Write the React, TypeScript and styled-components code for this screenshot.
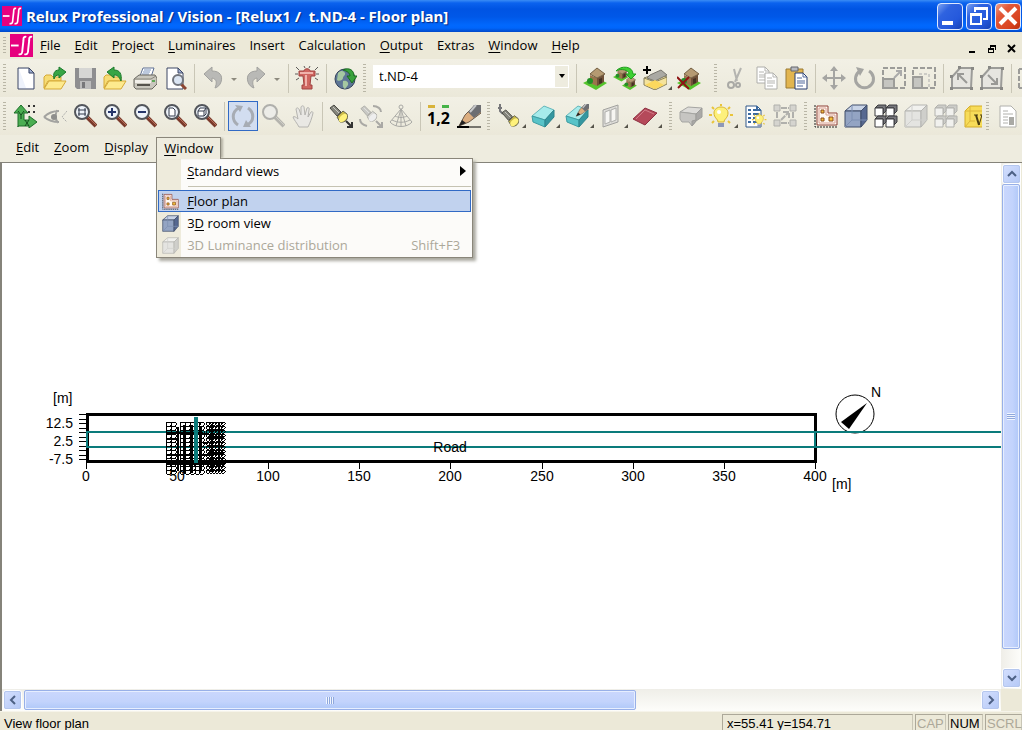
import React from 'react';
import styled, { createGlobalStyle, css } from 'styled-components';

const GlobalStyle = createGlobalStyle`
  * { box-sizing: border-box; }
  html, body { margin: 0; padding: 0; }
  body { background: #ece9d8; overflow: hidden; }
  button, select { font: inherit; color: inherit; }
`;

const Page = styled.div`
  display: flex;
  flex-direction: column;
  height: 100vh;
  overflow: hidden;
  background: #ece9d8;
  color: #000;
  font: 13px/18px "Open Sans", sans-serif;
`;

/* ---------- title bar ---------- */

const TitleBar = styled.header`
  display: flex;
  flex: none;
  align-items: center;
  height: 32px;
  padding: 0 1px 0 2px;
  background: linear-gradient(#3a8cf5 0, #0b62ee 3px, #0054e3 9px, #0058e8 17px, #0168fd 25px, #0066fc 28px, #0148c8 32px);
`;

const Title = styled.h1`
  flex: 1;
  margin: 0 0 0 4px;
  color: #fff;
  font: bold 15px/20px "Noto Sans", sans-serif;
  text-shadow: 1px 1px 1px #0a2a80;
  white-space: pre;
`;

const WindowButtons = styled.div`
  display: flex;
  gap: 3px;
`;

const WindowButton = styled.button<{ $danger?: boolean }>`
  display: grid;
  place-items: center;
  width: 26px;
  height: 27px;
  padding: 0;
  border: 1px solid #dfe9ff;
  border-radius: 4px;
  background: ${(p) =>
    p.$danger
      ? 'linear-gradient(135deg, #f0a088 0, #e2593a 30%, #d9431f 75%, #b83010 100%)'
      : 'linear-gradient(135deg, #7ba2f2 0, #2f63e0 30%, #2458dc 70%, #1741b4 100%)'};
`;

/* ---------- menu bars ---------- */

const MenuBar = styled.nav`
  display: flex;
  flex: none;
  align-items: center;
  height: 27px;
  padding: 0 4px 0 0;
`;

const MenuButton = styled.button`
  height: 22px;
  padding: 0 7px 2px;
  border: 0;
  background: none;
  white-space: nowrap;
  u { text-underline-offset: 2px; }
`;

const MdiButtons = styled.div`
  display: flex;
  gap: 8px;
  margin: 6px 0 0 auto;
`;

const MdiButton = styled.button`
  display: grid;
  width: 12px;
  height: 12px;
  padding: 0;
  border: 0;
  background: none;
`;

const ViewMenuBar = styled.nav`
  display: flex;
  flex: none;
  align-items: flex-start;
  gap: 1px;
  height: 28px;
  padding: 2px 9px 0;
  border-bottom: 1px solid #85837a;
  background: #eeecdf;
`;

const MenuHost = styled.div`
  position: relative;
  z-index: 2;
`;

const OpenMenuButton = styled(MenuButton)`
  position: relative;
  z-index: 2;
  display: block;
  border: 1px solid #8a867a;
  border-bottom: 0;
  background: #eeecdf;
  box-shadow: 3px 0 2px -1px #b5b2a4;
`;

const Dropdown = styled.ul`
  position: absolute;
  top: 21px;
  left: 0;
  width: 317px;
  margin: 0;
  padding: 1px;
  border: 1px solid #8a867a;
  background: linear-gradient(90deg, #eeebdc 24px, #fcfbf9 24px);
  box-shadow: 3px 3px 3px #aaa9a0;
  list-style: none;
`;

const DropdownItem = styled.button<{ $active?: boolean }>`
  display: flex;
  align-items: center;
  width: 100%;
  height: 22px;
  padding: 0 8px 0 2px;
  border: 1px solid ${(p) => (p.$active ? '#316ac5' : 'transparent')};
  background: ${(p) => (p.$active ? '#c1d2ee' : 'none')};
  text-align: left;
  u { text-underline-offset: 2px; }
  &:disabled { color: #aca899; }
`;

const ItemIcon = styled.span`
  display: grid;
  flex: none;
  place-items: center;
  width: 18px;
  margin-right: 8px;
`;

const ItemHint = styled.span`
  margin-left: auto;
  padding-right: 2px;
`;

const Submark = styled.svg`
  margin: 0 -4px 0 auto;
`;

const DropdownRule = styled.li`
  height: 1px;
  margin: 4px 0 3px 30px;
  background: #c5c2b2;
`;

/* ---------- tool bars ---------- */

const ToolRow = styled.div`
  display: flex;
  flex: none;
  align-items: center;
  height: 38px;
  overflow: hidden;
  background: linear-gradient(#f2f0e5, #eeecdf 60%, #ebe8d9);
`;

const Band = styled.div<{ $end?: number }>`
  display: flex;
  flex: none;
  align-items: center;
  padding-right: ${(p) => p.$end ?? 0}px;
`;

const Handle = styled.span<{ $short?: boolean }>`
  flex: none;
  width: 3px;
  height: ${(p) => (p.$short ? 18 : 28)}px;
  margin: 0 4px 0 3px;
  background: repeating-linear-gradient(#b9b6a6 0 1px, transparent 1px 3px);
`;

const Separator = styled.span`
  flex: none;
  width: 1px;
  height: 29px;
  margin: 0 3px 0 4px;
  background: #c9c6b6;
`;

const ToolButton = styled.button<{ $on?: boolean; $kind?: 'corner' | 'split' | 'cut' }>`
  display: flex;
  flex: none;
  align-items: center;
  width: 30px;
  height: 30px;
  padding: 0 2px;
  border: 1px solid transparent;
  background: none;
  ${(p) => p.$on && css`
    border-color: #316ac5;
    background: #d2ddf0;
  `}
  ${(p) => p.$kind === 'corner' && css`width: 34px;`}
  ${(p) => p.$kind === 'split' && css`width: 43px;`}
  ${(p) => p.$kind === 'cut' && css`width: 22px; overflow: hidden;`}
  & > svg { flex: none; }
`;

const CornerMark = styled.span`
  align-self: flex-end;
  width: 0;
  margin: 0 0 2px 1px;
  border: 2px solid #55534a;
  border-top-color: transparent;
  border-left-color: transparent;
`;

const SplitMark = styled.span`
  width: 0;
  margin: 2px 0 0 6px;
  border: 3px solid transparent;
  border-top-color: #8d8a7e;
  border-bottom: 0;
`;

const ComboBox = styled.label`
  display: flex;
  position: relative;
  width: 196px;
  height: 23px;
  margin: -4px 3px 0;
  border: 1px solid #fff;
  background: #fff;
  select {
    width: 100%;
    padding: 0 18px 0 5px;
    border: 0;
    appearance: none;
    background: #fff;
  }
`;

const ComboArrow = styled.span`
  position: absolute;
  inset: 0 0 0 auto;
  display: grid;
  place-items: center;
  width: 13px;
  background: #eeecdf;
  pointer-events: none;
`;

/* ---------- work area ---------- */

const WorkArea = styled.main`
  display: grid;
  flex: 1;
  grid-template: minmax(0, 1fr) 22px / minmax(0, 1fr) 20px;
  min-height: 0;
  padding-right: 1px;
  border-left: 2px solid #85837a;
`;

const Plan = styled.svg`
  width: 100%;
  height: 100%;
  background: #fff;
  font: 14px "Liberation Sans", Arial, sans-serif;
`;

const Scroll = styled.div<{ $vertical?: boolean }>`
  display: flex;
  flex-direction: ${(p) => (p.$vertical ? 'column' : 'row')};
  padding: 1px;
  background: linear-gradient(${(p) => (p.$vertical ? '90deg' : '180deg')}, #efeee8, #fdfdfa);
`;

const ScrollButton = styled.button`
  display: grid;
  flex: none;
  place-items: center;
  width: 19px;
  height: 20px;
  padding: 0;
  border: 1px solid #fff;
  border-radius: 3px;
  outline: 1px solid #b5c7ee;
  outline-offset: -2px;
  background: linear-gradient(135deg, #d5e0fe, #b4c8f6);
`;

const Track = styled.div<{ $vertical?: boolean }>`
  display: flex;
  flex: 1;
  flex-direction: ${(p) => (p.$vertical ? 'column' : 'row')};
  min-width: 0;
  min-height: 0;
  padding: ${(p) => (p.$vertical ? '0' : '0 0 0 2px')};
`;

const Thumb = styled.div<{ $vertical?: boolean }>`
  display: grid;
  flex: 0 0 ${(p) => (p.$vertical ? '96%' : '64%')};
  place-items: center;
  border: 1px solid #98b0e8;
  border-radius: 2px;
  box-shadow: inset 0 0 0 1px #e6eeff;
  background: linear-gradient(${(p) => (p.$vertical ? '90deg' : '180deg')}, #cad7fd, #c2d3fc 60%, #b0c8f8);
`;

const Grip = styled.span<{ $vertical?: boolean }>`
  width: 8px;
  height: 7px;
  background: repeating-linear-gradient(${(p) => (p.$vertical ? '180deg' : '90deg')}, #f0f5ff 0 1px, #8fa8dc 1px 2px);
`;

/* ---------- status bar ---------- */

const StatusBar = styled.footer`
  display: flex;
  flex: none;
  gap: 2px;
  height: 19px;
  padding: 2px 0 0 4px;
  overflow: hidden;
  border-top: 1px solid #f6f4ea;
  font: 13px/18px "Liberation Sans", Arial, sans-serif;
`;

const StatusText = styled.span`
  flex: 1;
  padding-top: 1px;
`;

const StatusPane = styled.span<{ $width: number; $off?: boolean }>`
  flex: none;
  width: ${(p) => p.$width}px;
  height: 22px;
  padding-left: ${(p) => (p.$width > 50 ? 4 : 1)}px;
  border: 1px solid #aca899;
  border-right-color: #c9c6b6;
  color: ${(p) => (p.$off ? '#aca899' : '#000')};
`;

/* ---------- icons ---------- */

const Icon = ({ children, size = 24 }: { children: React.ReactNode; size?: number }) => (
  <svg width={size} height={size} viewBox="0 0 24 24" fill="none" aria-hidden="true">{children}</svg>
);

const Logo = ({ size }: { size: number }) => (
  <svg width={size} height={size} viewBox="0 0 24 24" fill="none" stroke="#fff" aria-hidden="true">
    <path d="M0 0h24v24H0z" fill="#e6007e" stroke="none" />
    <path d="M1 12h8" strokeWidth="2" />
    <path d="M17 3c-3-1-3 2-3 4l-1 9c0 4-1 6-4 5M23 3c-3-1-3 2-3 4l-1 9c0 4-1 6-4 5" strokeWidth="2" />
  </svg>
);

const NewIcon = () => (
  <Icon>
    <path d="M5 2h11l5 5v16H5z" fill="#eef2fb" stroke="#3c4664" />
    <path d="M6 3h9v5h5v14H13z" fill="#fff" />
    <path d="M16 2v5h5z" fill="#9fb0d4" stroke="#3c4664" />
  </Icon>
);

const Folder = ({ flip }: { flip?: boolean }) => (
  <Icon>
    <path d="M1 11l2-2h5l2 2h8v4H5l-4 7z" fill="#f6dc74" stroke="#d5a936" />
    <path d="M6 15h17l-5 8H1z" fill="#fdea8e" stroke="#d5a936" />
    {flip ? (
      <path d="M4 6l7-5v3c6 0 8 4 7 11-2-4-3-6-7-6v3z" fill="#37a545" stroke="#1b7a2b" />
    ) : (
      <path d="M23 6l-7-5v3c-5 0-6 4-5 9 1-3 2-4 5-4v3z" fill="#37a545" stroke="#1b7a2b" />
    )}
  </Icon>
);

const SaveIcon = () => (
  <Icon>
    <path d="M2 2h21v21H4l-2-2z" fill="#8e8e90" />
    <path d="M6 2h13v10H6z" fill="#d6d6d4" />
    <path d="M7 15h11v8H7z" fill="#bcbcbc" />
    <path d="M9 16h3v6H9z" fill="#77777a" />
  </Icon>
);

const PrintIcon = () => (
  <Icon>
    <path d="M7 10l3-8h11l-3 9z" fill="#fff" stroke="#5d6f93" />
    <path d="M11 4h7M10 6h7M9 8h7" stroke="#7892bb" />
    <path d="M1 13l5-4h16l2 3v6l-5 5H3l-2-2z" fill="#c9c7bd" stroke="#68665f" />
    <path d="M1 13h17l5-3" stroke="#8a887e" />
    <path d="M2 14h16v3H2z" fill="#f2f0ea" />
    <path d="M4 19h13" stroke="#55534c" strokeWidth="2" />
    <path d="M19 15h3" stroke="#5da857" strokeWidth="2" />
  </Icon>
);

const PreviewIcon = () => (
  <Icon>
    <path d="M4 2h11l5 5v16H4z" fill="#fff" stroke="#3c4664" />
    <path d="M15 2v5h5z" fill="#9fb0d4" stroke="#3c4664" />
    <path d="M18 18l5 5" stroke="#8c4632" strokeWidth="3" />
    <circle cx="15" cy="14" r="5" fill="#dbe6f4" stroke="#71757d" strokeWidth="2" />
  </Icon>
);

const UndoIcon = ({ flip }: { flip?: boolean }) => (
  <Icon>
    <g transform={flip ? 'matrix(-1 0 0 1 24 0)' : undefined}>
      <path d="M3 8l8-7v4c8 0 11 5 9 11-1 3-3 5-6 6 2-5 2-9-3-10v4z" fill="#b9b9b6" stroke="#a2a29f" />
    </g>
  </Icon>
);

const HydrantIcon = () => (
  <Icon>
    <path d="M9 5c0-3 6-3 6 0h5v5h-4l-1 9h2v4H7v-4h2L8 10H4V5z" fill="#cf6660" stroke="#a04340" />
    <path d="M5 7h13M11 9v11" stroke="#f0b3ac" strokeWidth="2" />
    <path d="M1 1l3 3M0 8h3M1 14l3-2M23 1l-3 3M24 8h-3M23 14l-3-2M9 0l1 2M15 0l-1 2" stroke="#5c5a58" />
  </Icon>
);

const GlobeIcon = () => (
  <Icon>
    <circle cx="12" cy="13" r="10" fill="#5d7595" stroke="#34435b" />
    <path d="M5 7c3-3 6-2 7 0s-2 3-2 5-4 4-6 2zM10 15c3-1 6 1 5 4l-3 4c-3-2-2-5-2-8z" fill="#a5c8a1" />
    <path d="M10 4c6-3 11 0 11 6h3l-5 7-5-7h3c0-3-3-5-7-6z" fill="#39a23c" stroke="#1c6c22" />
  </Icon>
);

const House = () => (
  <g>
    <path d="M0 17l12-6 12 6-11 7z" fill="#55c42c" />
    <path d="M7 9l7 3v8l-7-3z" fill="#9b744c" />
    <path d="M14 12l7-4v8l-7 4z" fill="#6f5038" />
    <path d="M7 8l7-6 8 6-8 4z" fill="#b59a72" stroke="#756044" />
    <path d="M16 13l3-1v5l-3 1z" fill="#453123" />
    <circle cx="7" cy="15" r="3" fill="#238f26" />
  </g>
);

const SiteIcon = () => <Icon><House /></Icon>;

const SitesIcon = () => (
  <Icon>
    <g transform="scale(.65)"><House /></g>
    <g transform="translate(9 9) scale(.62)"><House /></g>
    <path d="M3 5c5-6 17-5 17 3h3l-5 5-5-5h3c0-4-8-6-13-3z" fill="#3fd031" stroke="#20a01e" />
  </Icon>
);

const AddRoomIcon = () => (
  <Icon>
    <path d="M1 12l14-5 9 4v7l-12 6-11-5z" fill="#f5e39b" stroke="#87805f" />
    <path d="M1 12l11 4 12-5M12 16v8" stroke="#87805f" />
    <path d="M7 9l11-5 6 5-12 6-8-3z" fill="#aaa9a3" stroke="#77756e" />
    <path d="M2 19l10-5 9 5-9 4z" fill="#fbd85d" />
    <path d="M4 0v8M0 4h8" stroke="#000" strokeWidth="2" />
  </Icon>
);

const RemoveSiteIcon = () => (
  <Icon>
    <House />
    <path d="M0 11l12 12M12 11L1 22" stroke="#8e1414" strokeWidth="2" />
  </Icon>
);

const CutIcon = () => (
  <Icon>
    <path d="M17 2l-6 14M10 3l3 12" stroke="#b4b4b0" strokeWidth="2" />
    <circle cx="7" cy="19" r="3" stroke="#a9a9a5" strokeWidth="2" />
    <circle cx="14" cy="19" r="2" stroke="#a9a9a5" strokeWidth="2" />
  </Icon>
);

const Sheet = ({ x, y, ink, edge }: { x: number; y: number; ink: string; edge: string }) => (
  <g transform={`translate(${x} ${y})`}>
    <path d="M0 0h8l4 4v12H0z" fill="#fff" stroke={edge} />
    <path d="M8 0v4h4M2 5h5M2 8h8M2 10h8M2 13h6" stroke={ink} />
  </g>
);

const CopyIcon = () => (
  <Icon>
    <Sheet x={3} y={1} ink="#b5b5b1" edge="#aeaeaa" />
    <Sheet x={11} y={7} ink="#b5b5b1" edge="#aeaeaa" />
  </Icon>
);

const PasteIcon = () => (
  <Icon>
    <path d="M2 3h17v19H2z" fill="#e2b54f" stroke="#9a7a35" />
    <path d="M7 1h7v4H7z" fill="#b8bac0" stroke="#62656d" />
    <Sheet x={11} y={7} ink="#50689b" edge="#263b6e" />
  </Icon>
);

const MoveIcon = () => (
  <Icon>
    <path d="M12 3v18M3 12h18" stroke="#a5a5a2" strokeWidth="2" />
    <path d="M12 0l4 5H8zM12 24l4-5H8zM0 12l5-4v8zM24 12l-5-4v8z" fill="#a5a5a2" />
  </Icon>
);

const RotateIcon = () => (
  <Icon>
    <path d="M8 5a9 9 0 1 0 9 0" stroke="#a5a5a2" strokeWidth="3" />
    <path d="M4 1l8 2-4 7z" fill="#a5a5a2" />
  </Icon>
);

const ScaleIcon = ({ wide }: { wide?: boolean }) => (
  <Icon>
    <path d="M1 2h22v20H1z" stroke="#9c9c99" strokeWidth="2" strokeDasharray="5 2" />
    <path d={wide ? 'M1 11h9v11H1z' : 'M1 13h11v9H1z'} fill="#c5c5c1" stroke="#9c9c99" strokeWidth="2" />
    {wide ? <path d="M7 8h10M17 8v14" stroke="#aaa" strokeDasharray="3 2" /> : <path d="M12 12l6-6M14 5h5v5" stroke="#aaa" strokeWidth="2" />}
  </Icon>
);

const PolygonIcon = ({ inward }: { inward?: boolean }) => (
  <Icon>
    <path d="M2 22V11l8-9h12l-1 20z" fill="#e6e5e0" stroke="#9c9c99" strokeWidth="2" />
    <path d="M0 9h3v3H0zM8 0h3v3H8zM21 1h3v3h-3zM20 21h3v3h-3zM0 21h3v3H0z" fill="#888885" />
    {inward ? (
      <path d="M8 9l8 8M17 12v6h-6" stroke="#999996" strokeWidth="2" />
    ) : (
      <path d="M17 17l-8-8M8 14V8h6" stroke="#999996" strokeWidth="2" />
    )}
  </Icon>
);

const EdgeIcon = () => (
  <Icon><path d="M1 3v20M1 3h10M1 22h10" stroke="#9c9c99" strokeWidth="2" strokeDasharray="5 2" /></Icon>
);

const AxesIcon = () => (
  <Icon>
    <path d="M5 23V9H1l7-8 7 8h-4v7h5v-4l8 6-8 6v-2H5z" fill="#4bae52" stroke="#1e6f2a" />
    <path d="M5 7l3 4 3-4M8 11v4M12 16l4 6M16 16l-4 6" stroke="#124b1b" />
    <path d="M15 2h8M15 8h8" stroke="#333" strokeDasharray="2 3" strokeWidth="2" />
  </Icon>
);

const EyeIcon = () => (
  <Icon>
    <path d="M1 13c5-5 9-6 15-6M1 13c5 4 9 5 15 5M14 6c-2 5-2 9 1 13" stroke="#a3a3a0" strokeWidth="2" />
    <circle cx="11" cy="13" r="3" fill="#8e8e8c" />
    <path d="M24 7l-5 6 5 5" stroke="#b0b0ad" strokeDasharray="2 1" />
  </Icon>
);

const Magnifier = ({ children, off }: { children?: React.ReactNode; off?: boolean }) => (
  <Icon>
    <path d="M14 13l9 9" stroke={off ? '#b5b4ae' : '#7b3a2b'} strokeWidth="4" />
    <path d="M14 12l9 9" stroke={off ? '#cfcec8' : '#b8705a'} />
    <circle cx="9" cy="8" r="7" fill={off ? '#ecece8' : '#eef3fa'} stroke={off ? '#b0b0ac' : '#53565c'} strokeWidth="2" />
    {children}
  </Icon>
);

const ZoomRectIcon = () => <Magnifier><path d="M5 6h8M5 10h8M6 4v8M12 4v8" stroke="#333a4c" /></Magnifier>;
const ZoomInIcon = () => <Magnifier><path d="M5 8h8M9 4v8" stroke="#26366b" strokeWidth="2" /></Magnifier>;
const ZoomOutIcon = () => <Magnifier><path d="M5 8h8" stroke="#26366b" strokeWidth="2" /></Magnifier>;
const ZoomPageIcon = () => <Magnifier><path d="M6 4h4l2 2v6H6z" fill="#fff" stroke="#333a4c" /></Magnifier>;
const ZoomBoxIcon = () => <Magnifier><path d="M5 7l2-3h6v6l-2 2H5zM5 7h6v5M11 7l2-3" fill="#fff" stroke="#333a4c" /></Magnifier>;

const RefreshIcon = () => (
  <Icon>
    <path d="M8 4C0 8 1 17 7 21M16 21c8-4 7-13 1-17" stroke="#a7acb4" strokeWidth="3" />
    <path d="M4 1l8 1-3 6zM20 23l-8 0 3-7z" fill="#a7acb4" />
  </Icon>
);

const HandIcon = () => (
  <Icon>
    <path d="M8 23C6 19 3 16 2 13c1-1 3 0 5 2L5 5c1-2 2-1 3 0l2 6V3c1-2 3-1 3 0l1 8 2-7c1-1 3 0 2 2l-1 7 3-5c1-1 2 0 2 1-1 5-3 10-5 14z" fill="#e9e8e4" stroke="#b5b4b0" />
  </Icon>
);

const Torch = ({ off }: { off?: boolean }) => (
  <g>
    <path d="M1 4l4-3 7 7-4 4z" fill={off ? '#c7c7c3' : '#85857c'} stroke={off ? '#a9a9a5' : '#4b4b45'} />
    <path d="M4 3l6 6" stroke={off ? '#e5e5e2' : '#c9c9c2'} />
    <path d="M8 13l6-6 4 3c2 5-2 9-7 8z" fill={off ? '#dddcd8' : '#c9b94a'} stroke={off ? '#a9a9a5' : '#67654c'} />
    <ellipse cx="14" cy="14" rx="3" ry="5" transform="rotate(45 14 14)" fill={off ? '#eee' : '#fff27c'} />
  </g>
);

const TorchDropIcon = () => (
  <Icon><Torch /><path d="M17 17l6 6M23 18v5h-5" stroke="#333" strokeWidth="2" /></Icon>
);

const TorchTurnIcon = () => (
  <Icon>
    <g transform="translate(1 1) scale(.9)"><Torch off /></g>
    <path d="M14 2c5 0 8 3 8 6M1 15c0 4 3 6 7 7M17 17l6 6M23 18v5h-5" stroke="#aaa9a5" strokeWidth="2" />
  </Icon>
);

const ConeIcon = () => (
  <Icon>
    <path d="M12 5L1 18c5 6 17 6 22 0zM12 5L7 22M12 5l5 17M12 5v18M6 12c4 2 8 2 12 0M3 16c6 3 12 3 18 0" stroke="#a9a9a5" />
    <circle cx="12" cy="3" r="2" stroke="#a9a9a5" />
  </Icon>
);

const NumbersIcon = () => (
  <Icon>
    <path d="M1 1h7v3H1z" fill="#d8b33a" />
    <path d="M15 1h7v3h-7z" fill="#46b347" />
    <text x="0" y="20" fill="#000" fontFamily="Open Sans, sans-serif" fontSize="16" fontWeight="700">1,2</text>
  </Icon>
);

const Pencil = () => (
  <g>
    <path d="M2 22l6-11 8-8h8v6L12 18z" fill="#dcae80" stroke="#6c5a49" />
    <path d="M11 8l6-7h7v7l-7 6z" fill="#6d6e72" />
    <path d="M13 8l6-7" stroke="#c7c8ca" strokeWidth="2" />
    <path d="M2 22l3-6 4 3z" fill="#222" />
  </g>
);

const PencilIcon = () => <Icon><Pencil /><path d="M0 23h12" stroke="#000" strokeWidth="2" /><path d="M12 23h12" stroke="#000" /></Icon>;

const LampIcon = () => (
  <Icon>
    <path d="M3 0v7l3 3M1 4h4" stroke="#77777a" strokeWidth="2" />
    <g transform="translate(4 5) scale(.95)"><Torch /></g>
  </Icon>
);

const Block = () => (
  <g>
    <path d="M1 12L13 2l10 4-9 10z" fill="#a6ebeb" stroke="#64b6ba" />
    <path d="M1 12l13 4v7L2 18z" fill="#58c3c8" stroke="#3d9ca2" />
    <path d="M14 16l9-10v7l-9 10z" fill="#3597a0" stroke="#2c848c" />
  </g>
);

const BlockIcon = () => <Icon><Block /></Icon>;
const EditBlockIcon = () => (
  <Icon><Block /><g transform="translate(10 -1) scale(.6)"><Pencil /></g></Icon>
);

const WindowIcon = () => (
  <Icon>
    <path d="M4 6l15-5v17L4 23z" fill="#dddcd8" stroke="#a2a29f" />
    <path d="M6 8l5-2v12l-5 2zM12 6l5-2v12l-5 2z" fill="#f6f5f2" stroke="#b0b0ad" />
  </Icon>
);

const SurfaceIcon = () => (
  <Icon><path d="M0 15L12 4l12 5-12 12z" fill="#b5495a" stroke="#8d3042" /><path d="M3 15L12 6l9 4" stroke="#d17c88" /></Icon>
);

const SpotIcon = () => (
  <Icon>
    <path d="M1 8l8-5 14 1-6 6z" fill="#dddcd9" stroke="#a5a5a2" />
    <path d="M1 8l16 2v7l-4 5-3-4H3l-2-3z" fill="#c6c5c2" stroke="#a5a5a2" />
    <path d="M17 10l6-6v9l-6 4-4 5v-5l4-1z" fill="#aaa9a7" stroke="#9c9c99" />
  </Icon>
);

const Bulb = () => (
  <g>
    <path d="M12 0v2M3 3l2 2M21 3l-2 2M0 11h3M21 11h3M3 19l2-2M21 19l-2-2" stroke="#e9c43a" strokeWidth="2" />
    <path d="M9 18c0-3-4-4-4-9 0-8 14-8 14 0 0 5-4 6-4 9z" fill="#fdf07c" stroke="#d9b52c" />
    <circle cx="10" cy="8" r="2" fill="#fff" />
    <path d="M9 19h6v4H9z" fill="#8e98b8" />
  </g>
);

const BulbIcon = () => <Icon><Bulb /></Icon>;

const SceneListIcon = () => (
  <Icon>
    <path d="M3 2h11l4 4v17H3z" fill="#fff" stroke="#31588a" />
    <path d="M14 2v4h4M5 6h3M10 6h3M5 10h3M10 10h6M5 14h3M10 14h4M5 18h3M10 18h4" stroke="#3b6aa0" strokeWidth="2" />
    <g transform="translate(9 9) scale(.6)"><Bulb /></g>
  </Icon>
);

const ArrangeIcon = () => (
  <Icon>
    <path d="M1 1h6v6H1zM17 1h6v6h-6zM1 16h6v6H1zM17 16h6v6h-6z" fill="#d5d4cf" stroke="#b0b0ac" />
    <path d="M8 16l7-7M10 8h6v6M8 4h8M4 8v7M20 8v7M8 19h8" stroke="#b0b0ac" strokeWidth="2" strokeDasharray="6 1" />
  </Icon>
);

const FloorPlanIcon = ({ size }: { size?: number }) => (
  <Icon size={size}>
    <path d="M1 1v22h22" stroke="#222" strokeDasharray="2 1" />
    <path d="M3 2h11v7h9v12H3z" fill="#fffaf2" stroke="#8e3f34" />
    <path d="M5 4h7v7h9v8H5z" stroke="#dba095" />
    <path d="M7 6h3v3H7zM7 14h3v3H7zM15 13h4v4h-4z" fill="#f4c23a" stroke="#8a4a1c" />
  </Icon>
);

const CubeIcon = ({ off, size }: { off?: boolean; size?: number }) => {
  const edge = off ? '#b5b5b1' : '#3f4c69';
  return (
    <Icon size={size}>
      <path d="M1 7l7-6h15l-6 6z" fill={off ? '#f1f1ee' : '#c8d3e6'} stroke={edge} />
      <path d="M1 7h16v16H1z" fill={off ? '#e4e4e1' : '#93a4c3'} stroke={edge} />
      <path d="M17 7l6-6v15l-6 7z" fill={off ? '#cfcfcb' : '#566890'} stroke={edge} />
      <path d="M8 1v15h15M8 16l-7 7" stroke={off ? '#cfcfcc' : '#7d8fb2'} />
    </Icon>
  );
};

const CubesIcon = ({ off }: { off?: boolean }) => (
  <Icon>
    {[[12, 4], [1, 4], [12, 15], [1, 15]].map(([x, y]) => (
      <g key={`${x}-${y}`} transform={`translate(${x} ${y})`} stroke={off ? '#b2b2ae' : '#3b3b3e'}>
        <path d="M0 0l3-3h8v6l-3 3V0z" fill={off ? '#ccccc8' : '#77777c'} />
        <path d="M0 0h8v8H0z" fill={off ? '#f1f1ee' : '#fff'} />
      </g>
    ))}
  </Icon>
);

const VisionIcon = () => (
  <Icon>
    <path d="M1 7l5-5h17v16l-4 5H1z" fill="#f7dc59" stroke="#d3ac2b" />
    <path d="M1 7h17M6 2v15l-5 6M6 17h5" stroke="#dcb63a" />
    <path d="M10 11h4M16 11h4" stroke="#4a3d10" />
    <path d="M12 11l3 10" stroke="#4a3d10" strokeWidth="2" />
    <path d="M15 21l3-10" stroke="#4a3d10" />
  </Icon>
);

const ReportIcon = () => (
  <Icon>
    <path d="M4 2h11l5 5v16H4z" fill="#fff" stroke="#b0b0ac" />
    <path d="M7 7h5M7 10h10M7 13h5M7 16h5M7 19h5" stroke="#b0b0ac" />
    <path d="M13 13h5v8h-5z" fill="#a9a9a5" />
  </Icon>
);

const Chevron = ({ turn }: { turn: number }) => (
  <svg width="10" height="10" viewBox="0 0 10 10" fill="none" aria-hidden="true">
    <path d="M1 3l4 4 4-4" stroke="#4d6185" strokeWidth="2" transform={`rotate(${turn} 5 5)`} />
  </svg>
);

/* ---------- tool definitions ---------- */

type Tool = {
  label: string;
  icon: React.ReactNode;
  kind?: 'corner' | 'split' | 'cut';
  on?: boolean;
};

const tool = (label: string, icon: React.ReactNode, kind?: Tool['kind'], on?: boolean): Tool => ({ label, icon, kind, on });

const Tools = ({ items }: { items: Tool[] }) => (
  <>
    {items.map((t) => (
      <ToolButton key={t.label} type="button" aria-label={t.label} $kind={t.kind} $on={t.on}>
        {t.icon}
        {t.kind === 'corner' && <CornerMark />}
        {t.kind === 'split' && <SplitMark />}
      </ToolButton>
    ))}
  </>
);

const fileTools = [
  tool('New', <NewIcon />),
  tool('Open', <Folder />),
  tool('Save', <SaveIcon />),
  tool('Import', <Folder flip />),
  tool('Print', <PrintIcon />),
  tool('Print preview', <PreviewIcon />),
];
const historyTools = [tool('Undo', <UndoIcon />, 'split'), tool('Redo', <UndoIcon flip />, 'split')];
const siteTools = [
  tool('Scene', <SiteIcon />),
  tool('Duplicate scene', <SitesIcon />),
  tool('Add room', <AddRoomIcon />, 'corner'),
  tool('Remove scene', <RemoveSiteIcon />),
];
const clipboardTools = [tool('Cut', <CutIcon />), tool('Copy', <CopyIcon />), tool('Paste', <PasteIcon />)];
const transformTools = [
  tool('Move', <MoveIcon />),
  tool('Rotate', <RotateIcon />),
  tool('Scale', <ScaleIcon />),
  tool('Stretch', <ScaleIcon wide />),
];
const polygonTools = [tool('Add corner', <PolygonIcon />), tool('Remove corner', <PolygonIcon inward />)];
const zoomTools = [
  tool('Origin', <AxesIcon />),
  tool('Viewpoint', <EyeIcon />),
  tool('Zoom area', <ZoomRectIcon />),
  tool('Zoom in', <ZoomInIcon />),
  tool('Zoom out', <ZoomOutIcon />),
  tool('Zoom page', <ZoomPageIcon />),
  tool('Zoom room', <ZoomBoxIcon />),
];
const viewTools = [
  tool('Orbit', <RefreshIcon />, undefined, true),
  tool('Magnify', <Magnifier off />),
  tool('Pan', <HandIcon />),
];
const aimTools = [tool('Aim', <TorchDropIcon />), tool('Turn', <TorchTurnIcon />), tool('Distribution', <ConeIcon />)];
const noteTools = [tool('Values', <NumbersIcon />), tool('Draw', <PencilIcon />)];
const insertTools = [
  tool('Luminaire', <LampIcon />, 'corner'),
  tool('Solid', <BlockIcon />, 'corner'),
  tool('Edit solid', <EditBlockIcon />, 'corner'),
  tool('Window element', <WindowIcon />, 'corner'),
  tool('Surface', <SurfaceIcon />, 'corner'),
];
const lightTools = [
  tool('Spot', <SpotIcon />),
  tool('Light', <BulbIcon />, 'corner'),
  tool('Light scenes', <SceneListIcon />),
  tool('Arrange', <ArrangeIcon />),
];
const outputTools = [
  tool('Floor plan', <FloorPlanIcon />),
  tool('3D view', <CubeIcon />),
  tool('3D views', <CubesIcon />),
  tool('3D luminance', <CubeIcon off />),
  tool('3D luminance views', <CubesIcon off />),
  tool('Vision', <VisionIcon />, 'cut'),
];

/* ---------- floor plan ---------- */

const xTicks = [0, 50, 100, 150, 200, 250, 300, 350, 400];
const yTicks = [251, 256, 260, 265, 269, 274, 278, 283, 287, 292, 296];
const rows = Array.from({ length: 13 }, (_, i) => 259 + i * 4);

const LuminaireField = () => (
  <g fill="none" stroke="#000" shapeRendering="crispEdges">
    {rows.map((y) => (
      <g key={y}>
        {[164, 169, 178, 183, 188, 193, 197].map((x) => (
          <rect key={x} x={x} y={y} width="5" height="4" rx="1" />
        ))}
        {[204, 207, 210, 213, 216, 219].map((x) => (
          <rect key={x} x={x} y={y} width="4" height="3" rx="1" />
        ))}
      </g>
    ))}
    <path d="M165 270h36M165 276h12M165 292h42M176 264v44M182 262v48M190 262v48M199 264v44M201 271h5M201 280h5" strokeWidth="2" />
    <path d="M206 267h16M206 274h16M206 283h16M206 290h16M206 298h16M210 261v48M217 261v48" strokeWidth="2" />
    <path d="M165 299h58" strokeWidth="5" />
  </g>
);

const FloorPlan = () => (
  <Plan role="img" aria-label="Floor plan">
    <text x="51" y="240">[m]</text>
    <g textAnchor="end">
      <text x="71" y="265">12.5</text>
      <text x="71" y="283">2.5</text>
      <text x="71" y="301">-7.5</text>
    </g>
    <g stroke="#000" shapeRendering="crispEdges">
      {yTicks.map((y) => <path key={y} d={`M77 ${y}h8`} />)}
      {xTicks.map((v, i) => <path key={v} d={`M${Math.round(84 + i * 91.1)} 298v8`} />)}
    </g>
    <g textAnchor="middle">
      {xTicks.map((v, i) => <text key={v} x={Math.round(84 + i * 91.1)} y="318">{v}</text>)}
    </g>
    <text x="830" y="326">[m]</text>
    <path d="M85 251h728v47H85z" fill="none" stroke="#000" strokeWidth="3" shapeRendering="crispEdges" />
    <circle cx="853" cy="251" r="19" fill="none" stroke="#000" />
    <path d="M865 240l-26 19 8 7z" fill="#000" />
    <text x="869" y="234">N</text>
    <g stroke="#0a7b7b" strokeWidth="2" shapeRendering="crispEdges">
      <line x1="84" y1="269" x2="100%" y2="269" />
      <line x1="84" y1="284" x2="100%" y2="284" />
      <path d="M85 269v15M813 269v15" />
    </g>
    <LuminaireField />
    <path d="M194 254v46" stroke="#0a7b7b" strokeWidth="4" shapeRendering="crispEdges" />
    <text x="448" y="289" textAnchor="middle">Road</text>
  </Plan>
);

/* ---------- page ---------- */

const mainMenu: [string, string][] = [
  ['F', 'ile'], ['E', 'dit'], ['P', 'roject'], ['L', 'uminaires'], ['', 'Insert'],
  ['', 'Calculation'], ['O', 'utput'], ['', 'Extras'], ['W', 'indow'], ['H', 'elp'],
];
const viewMenu: [string, string][] = [['E', 'dit'], ['Z', 'oom'], ['D', 'isplay']];

const MenuItems = ({ items }: { items: [string, string][] }) => (
  <>
    {items.map(([key, rest]) => (
      <MenuButton key={key + rest} type="button">{key && <u>{key}</u>}{rest}</MenuButton>
    ))}
  </>
);

export default function App() {
  return (
    <Page>
      <GlobalStyle />
      <TitleBar>
        <Logo size={20} />
        <Title>{'Relux Professional / Vision - [Relux1 /  t.ND-4 - Floor plan]'}</Title>
        <WindowButtons>
          <WindowButton type="button" aria-label="Minimize">
            <svg width="20" height="20" viewBox="0 0 20 20"><path d="M2 15h11v4H2z" fill="#fff" /></svg>
          </WindowButton>
          <WindowButton type="button" aria-label="Restore">
            <svg width="20" height="20" viewBox="0 0 20 20" fill="none" stroke="#fff" strokeWidth="2">
              <path d="M2 8h10v10H2zM2 9h10M6 6V2h12v11h-4M6 3h12" />
            </svg>
          </WindowButton>
          <WindowButton type="button" aria-label="Close" $danger>
            <svg width="20" height="20" viewBox="0 0 20 20" stroke="#fff" strokeWidth="4"><path d="M2 2l16 16M18 2L2 18" /></svg>
          </WindowButton>
        </WindowButtons>
      </TitleBar>

      <MenuBar aria-label="Main menu">
        <Handle $short />
        <Logo size={23} />
        <MenuItems items={mainMenu} />
        <MdiButtons>
          <MdiButton type="button" aria-label="Minimize document">
            <svg width="12" height="12"><path d="M3 8h6v2H3z" /></svg>
          </MdiButton>
          <MdiButton type="button" aria-label="Restore document">
            <svg width="12" height="12" fillRule="evenodd">
              <path d="M2 5h6v5H2zM3 7v2h4V7zM4 2h6v5H9V4H5v1H4z" />
            </svg>
          </MdiButton>
          <MdiButton type="button" aria-label="Close document">
            <svg width="12" height="12" stroke="#000" strokeWidth="2"><path d="M2 2l7 7M9 2L2 9" /></svg>
          </MdiButton>
        </MdiButtons>
      </MenuBar>

      <ToolRow role="toolbar" aria-label="File and editing">
        <Band>
          <Handle />
          <Tools items={fileTools} />
          <Separator />
          <Tools items={historyTools} />
          <Separator />
          <Tools items={[tool('Calculate', <HydrantIcon />)]} />
          <Separator />
          <Tools items={[tool('Online update', <GlobeIcon />)]} />
        </Band>
        <Band $end={7}>
          <Handle />
          <ComboBox>
            <select aria-label="Active scene" defaultValue="t.ND-4">
              <option>t.ND-4</option>
            </select>
            <ComboArrow>
              <svg width="6" height="4"><path d="M0 0h6L3 4z" /></svg>
            </ComboArrow>
          </ComboBox>
          <Separator />
          <Tools items={siteTools} />
        </Band>
        <Band>
          <Handle />
          <Tools items={clipboardTools} />
          <Separator />
          <Tools items={transformTools} />
          <Separator />
          <Tools items={polygonTools} />
          <Separator />
          <Tools items={[tool('Edge', <EdgeIcon />)]} />
        </Band>
      </ToolRow>

      <ToolRow role="toolbar" aria-label="View and insert">
        <Band>
          <Handle />
          <Tools items={zoomTools} />
          <Separator />
          <Tools items={viewTools} />
          <Separator />
          <Tools items={aimTools} />
          <Separator />
          <Tools items={noteTools} />
        </Band>
        <Band $end={2}>
          <Handle />
          <Tools items={insertTools} />
        </Band>
        <Band $end={1}>
          <Handle />
          <Tools items={lightTools} />
        </Band>
        <Band>
          <Handle />
          <Tools items={outputTools} />
        </Band>
        <Band>
          <Handle />
          <Tools items={[tool('Report', <ReportIcon />)]} />
        </Band>
      </ToolRow>

      <ViewMenuBar aria-label="View menu">
        <MenuItems items={viewMenu} />
        <MenuHost>
          <OpenMenuButton type="button" aria-expanded="true"><u>W</u>indow</OpenMenuButton>
          <Dropdown>
            <li>
              <DropdownItem type="button">
                <ItemIcon />
                <span><u>S</u>tandard views</span>
                <Submark width="6" height="10"><path d="M0 0l6 5-6 5z" /></Submark>
              </DropdownItem>
            </li>
            <DropdownRule role="separator" />
            <li>
              <DropdownItem type="button" $active>
                <ItemIcon><FloorPlanIcon size={17} /></ItemIcon>
                <span><u>F</u>loor plan</span>
              </DropdownItem>
            </li>
            <li>
              <DropdownItem type="button">
                <ItemIcon><CubeIcon size={17} /></ItemIcon>
                <span>3<u>D</u> room view</span>
              </DropdownItem>
            </li>
            <li>
              <DropdownItem type="button" disabled>
                <ItemIcon><CubeIcon off size={17} /></ItemIcon>
                <span>3D Luminance distribution</span>
                <ItemHint>Shift+F3</ItemHint>
              </DropdownItem>
            </li>
          </Dropdown>
        </MenuHost>
      </ViewMenuBar>

      <WorkArea>
        <FloorPlan />
        <Scroll $vertical>
          <ScrollButton type="button" aria-label="Scroll up"><Chevron turn={180} /></ScrollButton>
          <Track $vertical><Thumb $vertical><Grip $vertical /></Thumb></Track>
          <ScrollButton type="button" aria-label="Scroll down"><Chevron turn={0} /></ScrollButton>
        </Scroll>
        <Scroll>
          <ScrollButton type="button" aria-label="Scroll left"><Chevron turn={90} /></ScrollButton>
          <Track><Thumb><Grip /></Thumb></Track>
          <ScrollButton type="button" aria-label="Scroll right"><Chevron turn={270} /></ScrollButton>
        </Scroll>
      </WorkArea>

      <StatusBar>
        <StatusText>View floor plan</StatusText>
        <StatusPane $width={191}>x=55.41 y=154.71</StatusPane>
        <StatusPane $width={31} $off>CAP</StatusPane>
        <StatusPane $width={35}>NUM</StatusPane>
        <StatusPane $width={37} $off>SCRL</StatusPane>
      </StatusBar>
    </Page>
  );
}
